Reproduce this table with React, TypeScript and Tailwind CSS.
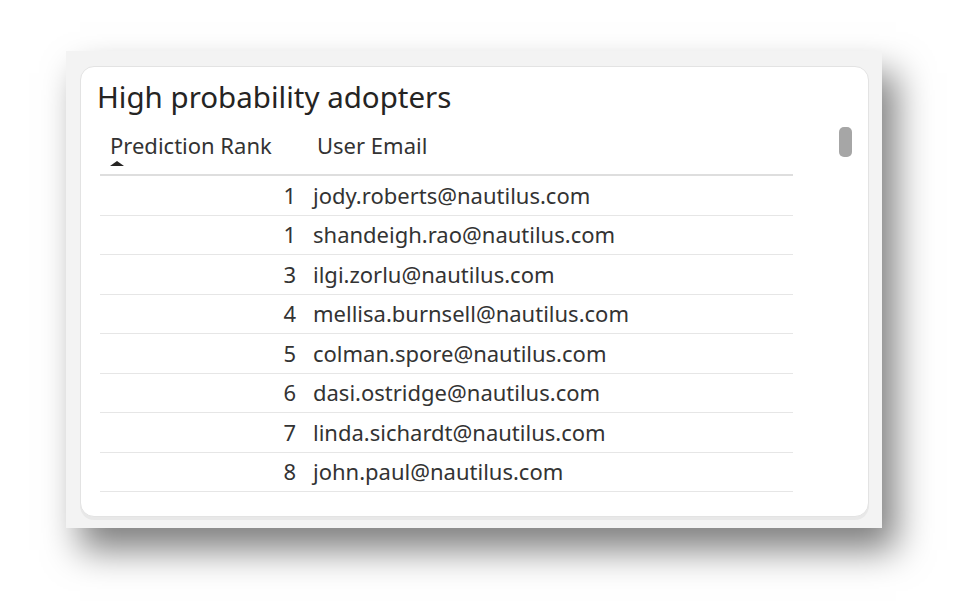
const rows: [number, string][] = [
  [1, "jody.roberts@nautilus.com"],
  [1, "shandeigh.rao@nautilus.com"],
  [3, "ilgi.zorlu@nautilus.com"],
  [4, "mellisa.burnsell@nautilus.com"],
  [5, "colman.spore@nautilus.com"],
  [6, "dasi.ostridge@nautilus.com"],
  [7, "linda.sichardt@nautilus.com"],
  [8, "john.paul@nautilus.com"],
];

export default function App() {
  return (
    <div className="w-[954px] h-[606px] bg-white pt-[51px] pl-[66px]" style={{ fontFamily: '"Noto Sans", "Open Sans", sans-serif' }}>
      <div className="w-[816px] h-[477px] bg-[#f3f3f3] shadow-[14px_22px_34px_rgba(0,0,0,0.5)] pt-[15px] pl-[14px]">
        <div className="relative w-[789px] h-[451px] bg-white rounded-[14px] border border-[#e3e3e3] shadow-[0_3px_0_#e8e8e8] pl-[19px] pt-[10px]">
          <h2 className="-ml-[3px] text-[29.5px] leading-[40px] text-[#252423]">High probability adopters</h2>
          <div className="w-[693px] text-[#333]">
            <div className="relative h-[59px] border-b-2 border-[#dedede] text-[22px] leading-[30px] flex pt-[13px]">
              <div className="w-[206px] pl-[10px] whitespace-nowrap">Prediction Rank</div>
              <div className="pl-[11px]">User Email</div>
              <span className="absolute left-[10px] top-[44px] w-0 h-0 border-l-[7px] border-r-[7px] border-b-[5px] border-l-transparent border-r-transparent border-b-[#252423]" />
            </div>
            {rows.map(([rank, email], i) => (
              <div key={i} className="flex h-[39.5px] items-center border-b border-[#e6e6e6] text-[22px]">
                <div className="w-[196px] text-right">{rank}</div>
                <div className="pl-[17px]">{email}</div>
              </div>
            ))}
          </div>
          <div className="absolute left-[758px] top-[60px] w-[13px] h-[30px] rounded-[5px] bg-[#a6a6a6]" />
        </div>
      </div>
    </div>
  );
}
